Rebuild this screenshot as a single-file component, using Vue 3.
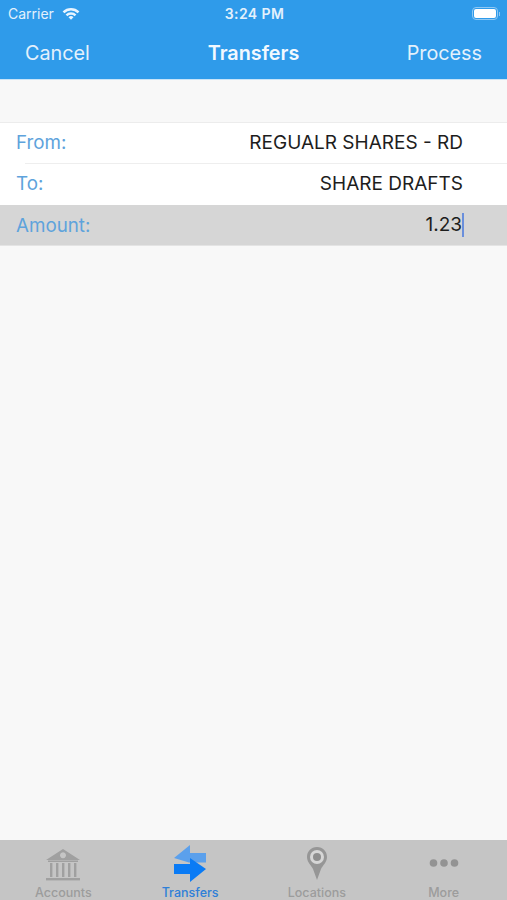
<script setup>
const rows = [
  { label: 'From:', value: 'REGUALR SHARES - RD' },
  { label: 'To:', value: 'SHARE DRAFTS' },
]
</script>

<template>
  <div class="screen">
    <header class="header">
      <div class="status">
        <div class="status-left">
          <span>Carrier</span>
          <svg class="wifi" width="18" height="13" viewBox="0 0 18 13">
            <path d="M0.6 4.4 A12 12 0 0 1 17.4 4.4 L15.6 6.2 A9.5 9.5 0 0 0 2.4 6.2 Z" fill="#e8f4ff" />
            <path d="M3.6 7.4 A7.7 7.7 0 0 1 14.4 7.4 L12.6 9.2 A5.2 5.2 0 0 0 5.4 9.2 Z" fill="#e8f4ff" />
            <path d="M6.5 10.2 A3.6 3.6 0 0 1 11.5 10.2 L9 12.8 Z" fill="#e8f4ff" />
          </svg>
        </div>
        <span class="clock">3:24 PM</span>
        <div class="battery">
          <div class="battery-body"><div class="battery-fill"></div></div>
          <div class="battery-cap"></div>
        </div>
      </div>
      <nav class="nav">
        <span>Cancel</span>
        <strong>Transfers</strong>
        <span class="nav-right">Process</span>
      </nav>
    </header>

    <main class="content">
      <section class="form">
        <div v-for="row in rows" :key="row.label" class="row">
          <span class="label">{{ row.label }}</span>
          <span class="value">{{ row.value }}</span>
        </div>
        <div class="row active">
          <span class="label">Amount:</span>
          <span class="value caret">1.23</span>
        </div>
      </section>
    </main>

    <footer class="tabs">
      <div class="tab">
        <svg width="36" height="46" viewBox="0 0 36 46" fill="#a0a0a0">
          <path d="M18 9 L35 20 H1 Z M18 12.2 a3 3 0 1 0 0.01 0 Z" fill-rule="evenodd" />
          <rect x="3" y="20.5" width="30" height="1.5" />
          <rect x="5" y="23" width="2.4" height="14" />
          <rect x="11" y="23" width="2.4" height="14" />
          <rect x="17" y="23" width="2.4" height="14" />
          <rect x="23" y="23" width="2.4" height="14" />
          <rect x="29" y="23" width="2.4" height="14" />
          <rect x="1" y="38" width="34" height="2.4" />
        </svg>
        <span>Accounts</span>
      </div>
      <div class="tab selected">
        <svg width="32" height="46" viewBox="0 0 32 46">
          <path d="M16 5 V13 H32 V22.5 H15 L0 18 Z" fill="#5ba0ec" />
          <path d="M0 24 H16 V18 L32 29 L16 42 V34 H0 Z" fill="#0a7bf5" />
        </svg>
        <span>Transfers</span>
      </div>
      <div class="tab">
        <svg width="22" height="46" viewBox="0 0 22 46">
          <path d="M11 7 C5 7 1 11.5 1 17 C1 22 5 25 7 29 L11 40 L15 29 C17 25 21 22 21 17 C21 11.5 17 7 11 7 Z" fill="#969696" />
          <circle cx="11" cy="17" r="7" fill="#d6d6d6" />
          <circle cx="11" cy="17" r="4" fill="#8e8e8e" />
        </svg>
        <span>Locations</span>
      </div>
      <div class="tab">
        <svg width="30" height="46" viewBox="0 0 30 46" fill="#939393">
          <circle cx="4.5" cy="23" r="3.8" />
          <circle cx="15" cy="23" r="3.8" />
          <circle cx="25.5" cy="23" r="3.8" />
        </svg>
        <span>More</span>
      </div>
    </footer>
  </div>
</template>

<style>
html, body {
  margin: 0;
  padding: 0;
}
</style>

<style scoped>
.screen {
  width: 507px;
  height: 900px;
  display: flex;
  flex-direction: column;
  background: #f8f8f8;
  font-family: Inter, "Liberation Sans", sans-serif;
  overflow: hidden;
}

.header {
  height: 80px;
  flex: none;
  background: #2f9bea;
  color: #fff;
  border-bottom: 1px solid #c9e4f8;
  box-sizing: border-box;
}

.status {
  height: 27px;
  display: grid;
  grid-template-columns: 1fr auto 1fr;
  align-items: center;
  padding: 0 7px 0 8px;
  font-size: 14px;
  color: #e3f1fc;
}

.status-left {
  display: flex;
  align-items: center;
  gap: 8px;
}

.clock {
  font-weight: 600;
  font-size: 14px;
  letter-spacing: 0.4px;
  margin-left: 1px;
}

.battery {
  justify-self: end;
  display: flex;
  align-items: center;
  gap: 1px;
}

.battery-body {
  width: 26px;
  height: 13px;
  box-sizing: border-box;
  border: 1px solid #8fc8f3;
  border-radius: 4px;
  padding: 1px;
}

.battery-fill {
  height: 100%;
  background: #fff;
  border-radius: 2px;
}

.battery-cap {
  width: 1px;
  height: 4px;
  background: #8fc8f3;
}

.nav {
  height: 51px;
  display: grid;
  grid-template-columns: 1fr auto 1fr;
  align-items: center;
  padding: 0 25px 3px;
  font-size: 19.8px;
  color: #e3f1fc;
}

.nav strong {
  font-weight: 600;
  color: #f2f9ff;
}

.nav-right {
  text-align: right;
}

.content {
  flex: 1;
  padding-top: 42px;
}

.form {
  background: #fff;
  border-top: 1px solid #ececec;
  font-size: 18.8px;
}

.row {
  height: 41px;
  display: flex;
  justify-content: space-between;
  align-items: center;
  padding: 0 44px 3px 16px;
  box-sizing: border-box;
  position: relative;
}

.row + .row:not(.active)::before {
  content: "";
  position: absolute;
  top: -1px;
  left: 25px;
  right: 0;
  height: 1px;
  background: #eeeeee;
}

.row.active {
  padding-bottom: 0;
  background: #d6d6d6;
  border-bottom: 1px solid #e4e4e4;
}

.label {
  color: #5ea3dc;
}

.value {
  color: #1d1d1d;
  font-size: 19px;
}

.caret {
  border-right: 2px solid #6a8fdc;
  line-height: 24px;
  margin-right: -1px;
}

.tabs {
  height: 60px;
  flex: none;
  display: grid;
  grid-template-columns: repeat(4, 1fr);
  background: #c5c5c5;
}

.tab {
  display: flex;
  flex-direction: column;
  align-items: center;
  color: #9c9c9c;
  font-size: 12.5px;
  font-weight: 500;
  line-height: 14px;
}

.tab.selected {
  color: #2e7fd8;
}
</style>
